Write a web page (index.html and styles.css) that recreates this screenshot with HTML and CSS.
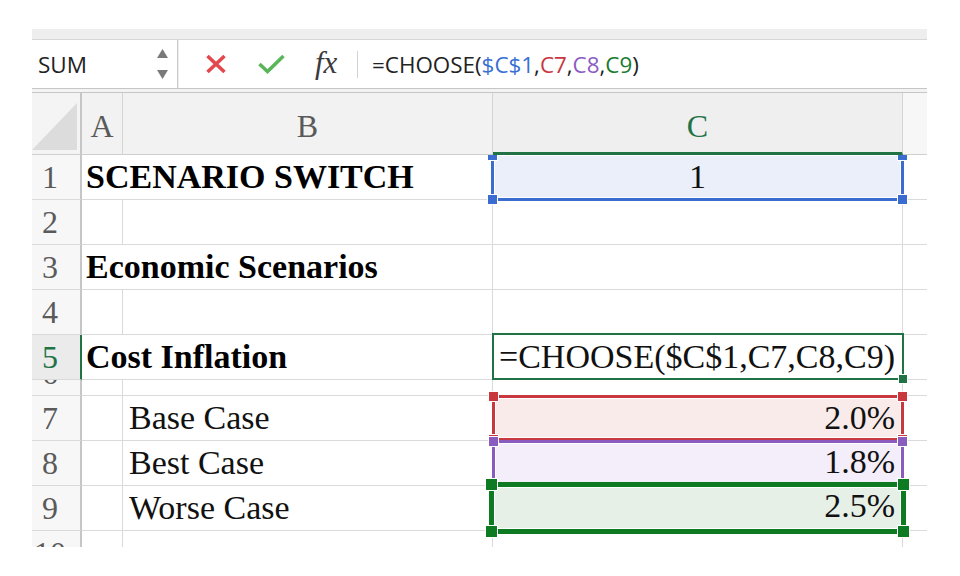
FILE: index.html
```html
<!DOCTYPE html>
<html>
<head>
<meta charset="utf-8">
<link rel="stylesheet" href="styles.css">
</head>
<body>
<div class="app">
  <div class="topband"></div>
  <div class="fbar">
    <div class="namebox">
      <span class="name">SUM</span>
      <span class="stepper">
        <svg width="11" height="9" viewBox="0 0 11 9"><polygon points="5.5,0 11,9 0,9" fill="#7a7a7a"/></svg>
        <svg width="11" height="9" viewBox="0 0 11 9"><polygon points="0,0 11,0 5.5,9" fill="#7a7a7a"/></svg>
      </span>
    </div>
    <svg class="btn-x" width="22" height="20" viewBox="0 0 22 20"><path d="M2.5 2 L19.5 18 M19.5 2 L2.5 18" stroke="#e2484c" stroke-width="3.6" fill="none"/></svg>
    <svg class="btn-ok" width="27" height="20" viewBox="0 0 27 20"><path d="M1.5 10 L9.5 17.5 L25.5 2" stroke="#5bb65a" stroke-width="3.6" fill="none"/></svg>
    <span class="fx">fx</span>
    <span class="fsepv"></span>
    <div class="formula">=CHOOSE(<span class="f-blue">$C$1</span>,<span class="f-red">C7</span>,<span class="f-purple">C8</span>,<span class="f-green">C9</span>)</div>
  </div>
  <div class="fline"></div>
  <div class="sheet">
    <!-- header -->
    <div class="c corner"><svg width="48" height="61" viewBox="0 0 48 61"><polygon points="0,57 45,57 45,10" fill="#dcdcdc"/></svg></div>
    <div class="c ch">A</div>
    <div class="c ch">B</div>
    <div class="c ch sel">C</div>
    <div class="c ch chd"></div>
    <!-- row 1 -->
    <div class="c rh">1</div>
    <div class="c span2 bold">SCENARIO SWITCH</div>
    <div class="c hold"><div class="rng blue"><span class="h tl"></span><span class="h tr"></span><span class="h bl"></span><span class="h br"></span>1</div></div>
    <div class="c d"></div>
    <!-- row 2 -->
    <div class="c rh">2</div>
    <div class="c"></div>
    <div class="c"></div>
    <div class="c"></div>
    <div class="c d"></div>
    <!-- row 3 -->
    <div class="c rh">3</div>
    <div class="c span2 bold">Economic Scenarios</div>
    <div class="c"></div>
    <div class="c d"></div>
    <!-- row 4 -->
    <div class="c rh">4</div>
    <div class="c"></div>
    <div class="c"></div>
    <div class="c"></div>
    <div class="c d"></div>
    <!-- row 5 -->
    <div class="c rh rsel">5</div>
    <div class="c span2 bold">Cost Inflation</div>
    <div class="c hold"><div class="active">=CHOOSE($C$1,C7,C8,C9)<span class="fill"></span></div></div>
    <div class="c d"></div>
    <!-- row 6 -->
    <div class="c rh">6</div>
    <div class="c"></div>
    <div class="c"></div>
    <div class="c"></div>
    <div class="c d"></div>
    <!-- row 7 -->
    <div class="c rh">7</div>
    <div class="c"></div>
    <div class="c label">Base Case</div>
    <div class="c hold"><div class="rng red"><span class="h tl"></span><span class="h tr"></span><span class="h bl"></span><span class="h br"></span>2.0%</div></div>
    <div class="c d"></div>
    <!-- row 8 -->
    <div class="c rh">8</div>
    <div class="c"></div>
    <div class="c label">Best Case</div>
    <div class="c hold"><div class="rng purple"><span class="h tl"></span><span class="h tr"></span><span class="h bl"></span><span class="h br"></span>1.8%</div></div>
    <div class="c d"></div>
    <!-- row 9 -->
    <div class="c rh">9</div>
    <div class="c"></div>
    <div class="c label">Worse Case</div>
    <div class="c hold"><div class="rng green"><span class="h tl"></span><span class="h tr"></span><span class="h bl"></span><span class="h br"></span>2.5%</div></div>
    <div class="c d"></div>
    <!-- row 10 -->
    <div class="c rh">10</div>
    <div class="c"></div>
    <div class="c"></div>
    <div class="c"></div>
    <div class="c d"></div>
  </div>
</div>
</body>
</html>
```
FILE: styles.css
```css
* { box-sizing: border-box; }
body {
  margin: 0;
  background: #fff;
}
.app {
  margin-left: 32px;
  width: 895px;
  padding-top: 29px;
}
.topband {
  height: 11px;
  background: #eeeeee;
  border-bottom: 1px solid #d6d6d6;
}
.fbar {
  height: 48px;
  display: flex;
  align-items: center;
  background: #fff;
  font-family: "Open Sans", "Liberation Sans", sans-serif;
}
.namebox {
  width: 146px;
  height: 100%;
  display: flex;
  align-items: center;
  border-right: 1px solid #c9c9c9;
  box-shadow: 1px 0 0 #ededed;
}
.name {
  width: 125px;
  padding-left: 6px;
  font-size: 22.5px;
  color: #222;
}
.stepper {
  display: flex;
  flex-direction: column;
  gap: 12px;
}
.stepper svg { display: block; }
.btn-x { margin-left: 27px; display: block; }
.btn-ok { margin-left: 31px; display: block; }
.fx {
  margin-left: 30px;
  width: 27px;
  font-family: "Liberation Serif", serif;
  font-style: italic;
  font-size: 31px;
  color: #3a3a3a;
  line-height: 1;
  padding-bottom: 4px;
  white-space: nowrap;
}
.fsepv {
  margin-left: 15px;
  width: 1px;
  height: 27px;
  background: #d2d2d2;
}
.formula {
  margin-left: 14px;
  font-size: 22.4px;
  color: #222;
}
.f-blue { color: #3a70d3; }
.f-red { color: #c9363e; }
.f-purple { color: #8b5cc2; }
.f-green { color: #187a2f; }
.fline {
  height: 5px;
  border-top: 1px solid #c6c6c6;
  border-bottom: 1px solid #c6c6c6;
  background: #f3f3f3;
}
.sheet {
  height: 454px;
  overflow: hidden;
  display: grid;
  grid-template-columns: 50px 41px 370px 410px 24px;
  grid-template-rows: 62px 45px 45px 45px 45px 45px 16px 45px 45px 45px 45px;
  font-family: "Liberation Serif", "Times New Roman", serif;
  font-size: 34px;
  line-height: 34px;
  color: #111;
}
.c {
  display: flex;
  align-items: flex-end;
  min-width: 0;
  white-space: nowrap;
  border-right: 1px solid #dadada;
  border-bottom: 1px solid #dadada;
  padding-bottom: 5px;
}
.c.d { border-right: none; }
.span2 { grid-column: span 2; padding-left: 4px; }
.bold { font-weight: bold; color: #000; }
.label { padding-left: 6px; }
.rh {
  background: #f7f7f7;
  border-right: 2px solid #c6c6c6;
  color: #5a5a5a;
  font-size: 32px;
  justify-content: center;
  padding-right: 12px;
  overflow: hidden;
}
.rh.rsel {
  background: #ebebeb;
  color: #217346;
  border-right-color: #217346;
}
.corner {
  background: #f4f4f4;
  border-right: 2px solid #c6c6c6;
  border-bottom-color: #cfcfcf;
  padding: 0;
  align-items: flex-start;
}
.corner svg { display: block; }
.ch {
  background: #f2f2f2;
  border-bottom-color: #cfcfcf;
  border-right-color: #d4d4d4;
  color: #595959;
  font-size: 32px;
  justify-content: center;
  padding-bottom: 11px;
}
.ch.sel {
  background: #efefef;
  color: #217346;
  border-bottom: 3px solid #217346;
  padding-bottom: 9px;
}
.ch.chd {
  background: #f7f7f7;
  border-right: none;
}
.hold { position: relative; }
.rng {
  position: absolute;
  top: -1px;
  left: -1px;
  right: -2px;
  bottom: -1px;
  border: 3px solid;
  box-shadow: inset 0 0 0 1px #fff;
  display: flex;
  align-items: flex-end;
  justify-content: flex-end;
  padding-right: 6px;
  padding-bottom: 3px;
}
.h {
  position: absolute;
  width: 11px;
  height: 11px;
  border: 1px solid #fff;
}
.h.tl { top: -7px; left: -7px; }
.h.tr { top: -7px; right: -7px; }
.h.bl { bottom: -7px; left: -7px; }
.h.br { bottom: -7px; right: -7px; }
.rng.blue {
  top: 0;
  left: -2px;
  bottom: -2px;
  border-color: #3a6dcf;
  border-top: none;
  background: #eaeff9;
  justify-content: center;
  padding-right: 0;
  padding-bottom: 4px;
}
.rng.blue .h { background: #3a6dcf; }
.rng.blue .h.tl, .rng.blue .h.tr { top: 0; height: 6px; border-top: none; }
.rng.red { border-color: #c9373f; background: #f9ebea; }
.rng.red .h { background: #c9373f; }
.rng.purple { border-color: #8b5cc0; background: #f3eef9; padding-bottom: 4px; }
.rng.purple .h { background: #8b5cc0; }
.rng.green {
  top: -4px;
  left: -4px;
  right: -4px;
  bottom: -4px;
  border: 5px solid #0e7b23;
  background: #e6f0e7;
  padding-bottom: 6px;
}
.rng.green .h { background: #0e7b23; width: 13px; height: 13px; }
.rng.green .h.tl { top: -9px; left: -9px; }
.rng.green .h.tr { top: -9px; right: -9px; }
.rng.green .h.bl { bottom: -9px; left: -9px; }
.rng.green .h.br { bottom: -9px; right: -9px; }
.active {
  position: absolute;
  top: -2px;
  left: -1px;
  right: -2px;
  bottom: -1px;
  border: 2px solid #217346;
  background: #fff;
  display: flex;
  align-items: flex-end;
  padding-left: 5px;
  padding-bottom: 4px;
}
.fill {
  position: absolute;
  right: -6px;
  bottom: -6px;
  width: 10px;
  height: 10px;
  background: #217346;
  border: 1px solid #fff;
}
```
